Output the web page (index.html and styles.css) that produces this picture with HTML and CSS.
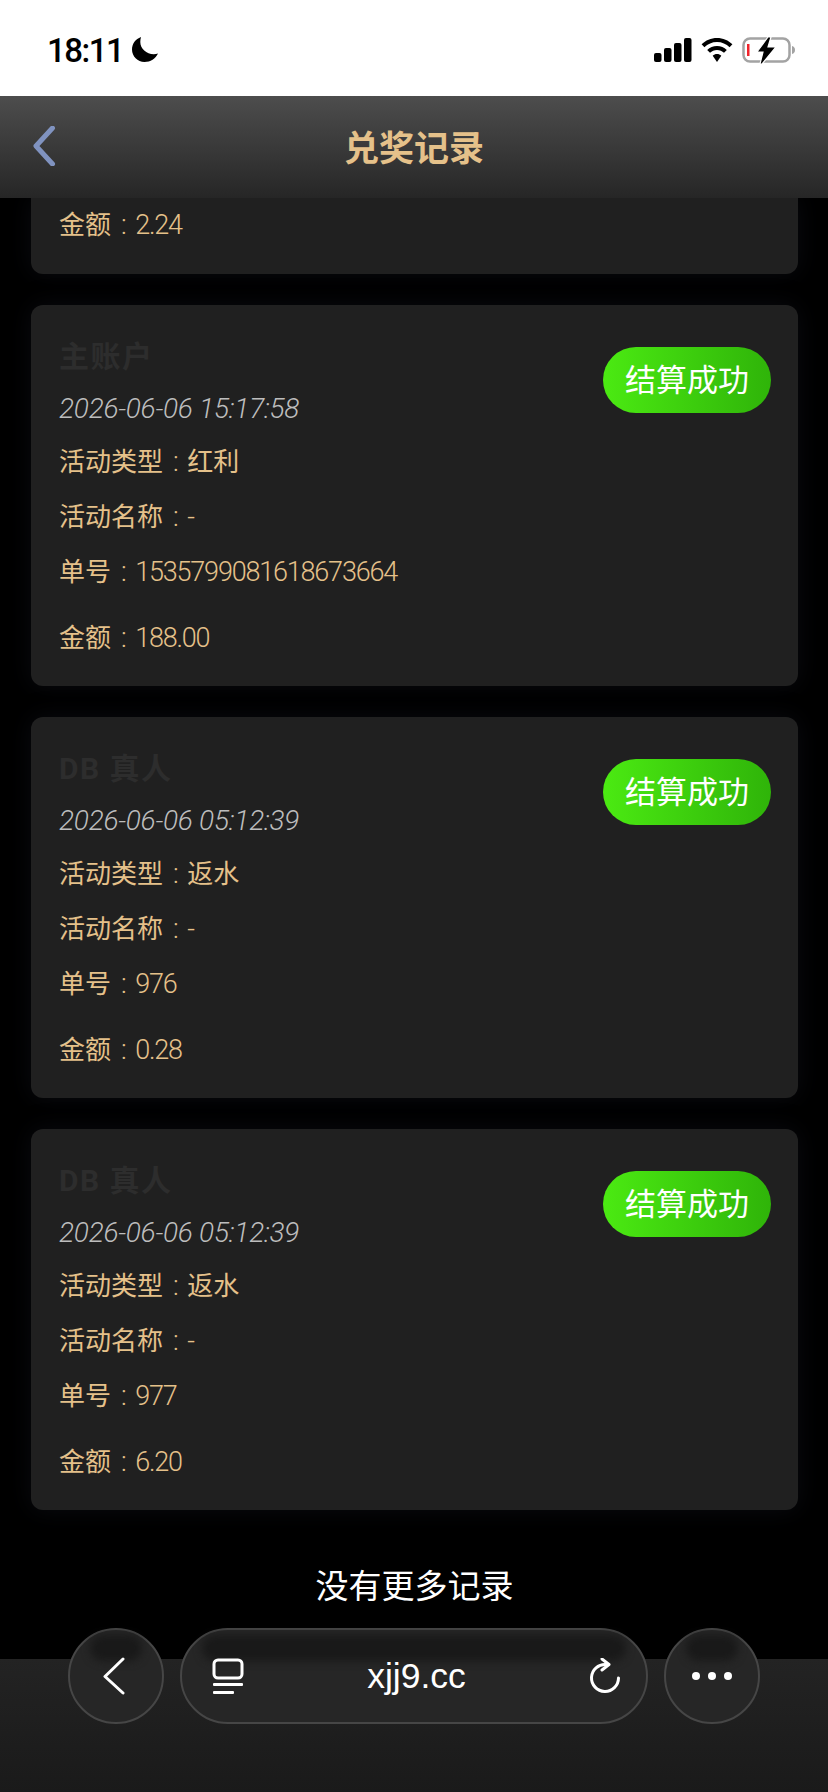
FILE: index.html
```html
<!DOCTYPE html>
<html lang="zh-CN">
<head>
    <meta charset="UTF-8">
    <meta name="viewport" content="width=device-width, initial-scale=1.0">
    <title>兑奖记录</title>
    <link rel="stylesheet" href="styles.css">
</head>
<body>
    <div class="status-bar">
        <div class="status-left">
            <span class="status-time">18:11</span>
            <svg class="moon" width="26" height="25" viewBox="0 0 26 25"><path d="M9 0C3.600 2 0 6.800 0 12.500 0 19.400 5.600 25 12.500 25 18.400 25 23.600 21.600 26 16.500 24.800 17 23.200 17.200 21.800 17.200 14.400 17.200 8.300 11.600 8.300 5 8.300 3.200 8.500 1.500 9 0Z" fill="#000"/></svg>
        </div>
        <div class="status-right">
            <svg width="38" height="24" viewBox="0 0 38 24"><rect x="0" y="15" width="7.500" height="9" rx="2"/><rect x="10" y="10" width="7.500" height="14" rx="2"/><rect x="20" y="5" width="7.500" height="19" rx="2"/><rect x="30" y="0" width="7.500" height="24" rx="2"/></svg>
            <svg width="32" height="24" viewBox="0 0 32 24"><path d="M16 0C10 0 4.600 2.400.6 6.300L3.400 9.200C6.700 6 11.100 4 16 4S25.300 6 28.600 9.200L31.400 6.300C27.400 2.400 22 0 16 0Z"/><path d="M16 8C12.200 8 8.800 9.500 6.200 11.900L9 14.800C10.800 13.100 13.300 12 16 12S21.200 13.100 23 14.800L25.800 11.900C23.200 9.500 19.800 8 16 8Z"/><path d="M16 16C14.300 16 12.900 16.600 11.700 17.700L16 24 20.300 17.700C19.100 16.600 17.700 16 16 16Z"/></svg>
            <svg class="battery" width="54" height="28" viewBox="0 0 54 28">
                <rect x="1.500" y="2.500" width="46" height="23" rx="6.500" fill="none" stroke="#a3a3a3" stroke-width="2.500"/>
                <rect x="5" y="8" width="2.500" height="12" fill="#f0242c"/>
                <path d="M15 16 26 1H29L26 11H34L20 28H18L21 16Z" fill="#000" stroke="#fff" stroke-width="1.200"/>
                <path d="M50 10C52 10.500 53 12 53 14S52 17.500 50 18Z" fill="#a3a3a3"/>
            </svg>
        </div>
    </div>

    <header class="top-bar">
        <svg class="top-back" width="24" height="40" viewBox="0 0 24 40"><path d="M20.500 2 4 20 20.500 38" fill="none" stroke="#8093c0" stroke-width="5" stroke-linecap="round" stroke-linejoin="round"/></svg>
        <h1>兑奖记录</h1>
    </header>

    <main class="records">
        <div class="card card-cut">
            <div class="row row-amount">金额<span class="num"> : 2.24</span></div>
        </div>

        <div class="card">
            <div class="card-head">
                <div>
                    <div class="account">主账户</div>
                    <div class="time">2026-06-06 15:17:58</div>
                </div>
                <span class="badge">结算成功</span>
            </div>
            <div class="row">活动类型<span class="num"> : </span>红利</div>
            <div class="row">活动名称<span class="num"> : -</span></div>
            <div class="row">单号<span class="num"> : 1535799081618673664</span></div>
            <div class="row row-amount">金额<span class="num"> : 188.00</span></div>
        </div>

        <div class="card">
            <div class="card-head">
                <div>
                    <div class="account">DB 真人</div>
                    <div class="time">2026-06-06 05:12:39</div>
                </div>
                <span class="badge">结算成功</span>
            </div>
            <div class="row">活动类型<span class="num"> : </span>返水</div>
            <div class="row">活动名称<span class="num"> : -</span></div>
            <div class="row">单号<span class="num"> : 976</span></div>
            <div class="row row-amount">金额<span class="num"> : 0.28</span></div>
        </div>

        <div class="card">
            <div class="card-head">
                <div>
                    <div class="account">DB 真人</div>
                    <div class="time">2026-06-06 05:12:39</div>
                </div>
                <span class="badge">结算成功</span>
            </div>
            <div class="row">活动类型<span class="num"> : </span>返水</div>
            <div class="row">活动名称<span class="num"> : -</span></div>
            <div class="row">单号<span class="num"> : 977</span></div>
            <div class="row row-amount">金额<span class="num"> : 6.20</span></div>
        </div>

        <p class="no-more">没有更多记录</p>
    </main>

    <footer class="browser-bar">
        <nav class="browser-nav">
            <button class="glass glass-round">
                <svg class="nav-back" width="24" height="38" viewBox="0 0 24 38"><path d="M21 2 3 19.500 21 36" fill="none" stroke="#fff" stroke-width="3" stroke-linecap="round" stroke-linejoin="round"/></svg>
            </button>
            <div class="glass glass-pill">
                <svg width="32" height="37" viewBox="0 0 32 37"><rect x="2" y="2" width="28" height="18" rx="4" fill="none" stroke="#fff" stroke-width="3"/><rect x="1" y="25" width="30" height="3" rx="1" fill="#fff"/><rect x="1" y="33" width="21" height="3" rx="1" fill="#fff"/></svg>
                <span class="url">xjj9.cc</span>
                <svg width="32" height="37" viewBox="0 0 32 37"><path d="M17 6.500A13.500 13.500 0 1 0 29.500 20" fill="none" stroke="#fff" stroke-width="3" stroke-linecap="round"/><path d="M13 1 20 6.500 13 12" fill="none" stroke="#fff" stroke-width="3" stroke-linecap="round" stroke-linejoin="round"/></svg>
            </div>
            <button class="glass glass-round">
                <svg width="40" height="10" viewBox="0 0 40 10"><circle cx="4" cy="5" r="4" fill="#fff"/><circle cx="20" cy="5" r="4" fill="#fff"/><circle cx="36" cy="5" r="4" fill="#fff"/></svg>
            </button>
        </nav>
    </footer>
</body>
</html>
```

FILE: styles.css
```css
body {
    margin: 0;
    height: 1792px;
    background: #000;
    font-family: Roboto, 'Noto Sans CJK SC', sans-serif;
    display: flex;
    flex-direction: column;
    overflow: hidden;
}
.status-bar {
    height: 96px;
    flex-shrink: 0;
    background: #fff;
    display: flex;
    justify-content: space-between;
    align-items: center;
    padding: 4px 32px 0 47px;
    box-sizing: border-box;
}
.status-left {
    display: flex;
    align-items: center;
    gap: 9px;
}
.status-time {
    font-size: 33px;
    font-weight: 500;
    letter-spacing: -1.5px;
    color: #000;
}
.moon {
    margin-top: -2px;
}
.status-right {
    display: flex;
    align-items: center;
    gap: 9px;
}
.top-bar {
    height: 102px;
    flex-shrink: 0;
    background: linear-gradient(#4d4d4d, #262626);
    display: flex;
    justify-content: center;
    align-items: center;
    position: relative;
    z-index: 1;
}
.top-bar h1 {
    margin: -4px 0 0;
    font-size: 35px;
    font-weight: 700;
    color: #e5c18a;
}
.top-back {
    position: absolute;
    left: 32px;
    top: 30px;
}
.records {
    flex: 1;
    padding: 0 30px 0 31px;
    min-height: 0;
}
.card {
    height: 381px;
    box-sizing: border-box;
    margin-bottom: 31px;
    padding: 26px 27px 0 29px;
    background: #202020;
    border-radius: 12px;
    box-shadow: 0 0 24px rgba(30, 32, 45, 0.35);
}
.card-cut {
    height: 76px;
    padding-top: 0;
    border-radius: 0 0 12px 12px;
}
.card-head {
    display: flex;
    justify-content: space-between;
    align-items: center;
}
.account {
    height: 52px;
    line-height: 52px;
    margin-left: -1px;
    font-size: 30px;
    font-weight: 700;
    letter-spacing: 1.5px;
    color: #2d2d2d;
}
.time {
    height: 52px;
    line-height: 52px;
    margin-left: -1px;
    font-size: 28px;
    font-style: italic;
    font-weight: 300;
    letter-spacing: -0.25px;
    color: #bdbdbd;
}
.row {
    height: 55px;
    line-height: 55px;
    margin-left: -1px;
    font-size: 26px;
    color: #e5c18a;
}
.num {
    font-size: 27px;
    font-weight: 300;
    letter-spacing: -1.2px;
    word-spacing: 4.5px;
}
.row-amount {
    margin-top: 11px;
}
.card-cut .row-amount {
    margin-top: 0;
}
.badge {
    width: 168px;
    height: 66px;
    margin-top: -6px;
    line-height: 68px;
    text-align: center;
    border-radius: 33px;
    background: linear-gradient(90deg, #4bea12, #2fb409);
    color: #fff;
    font-size: 31px;
}
.no-more {
    margin: 57px 0 0;
    line-height: 40px;
    text-align: center;
    font-size: 33px;
    color: #fff;
}
.browser-bar {
    height: 133px;
    flex-shrink: 0;
    background: linear-gradient(#232323, #1a1a1a);
}
.browser-nav {
    display: flex;
    justify-content: center;
    gap: 16px;
    margin-top: -31px;
}
.glass {
    height: 96px;
    box-sizing: border-box;
    padding: 0;
    position: relative;
    display: flex;
    align-items: center;
    background: #262626;
    border: 2px solid #464646;
    border-radius: 48px;
}
.glass > * {
    position: relative;
}
.glass::before {
    content: '';
    position: absolute;
    top: 5px;
    height: 26px;
    background: #191919;
    border-radius: 16px;
    filter: blur(4px);
}
.glass-round {
    width: 96px;
    justify-content: center;
}
.glass-round::before {
    left: 20px;
    right: 20px;
}
.nav-back {
    margin-left: -4px;
}
.glass-pill {
    width: 468px;
    padding: 0 25px 0 30px;
    justify-content: space-between;
}
.glass-pill::before {
    left: 20px;
    right: 20px;
}
.url {
    font-family: 'Liberation Sans', sans-serif;
    font-size: 35.5px;
    color: #fff;
}
```
